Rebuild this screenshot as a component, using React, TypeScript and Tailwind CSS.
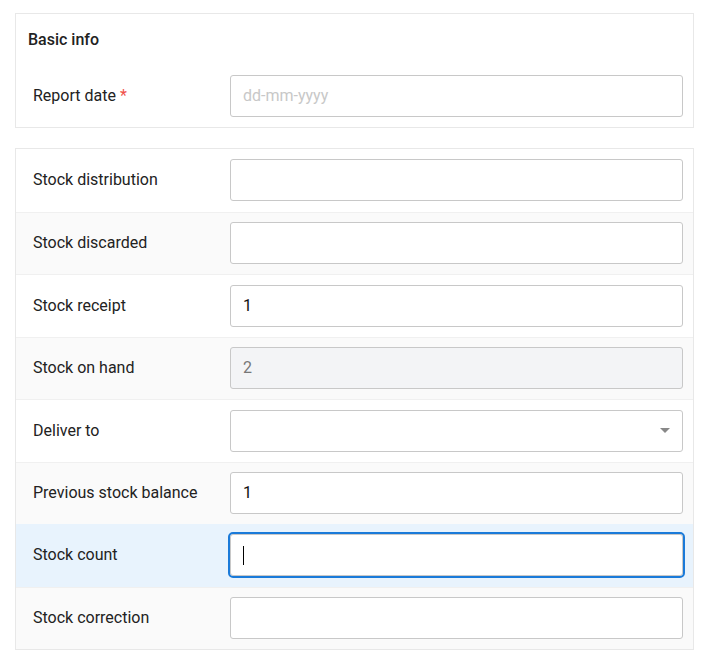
import { ReactNode } from "react";

type Row = {
    label: string;
    value?: string;
    kind?: "text" | "disabled" | "select" | "focused";
};

const rows: Row[] = [
    { label: "Stock distribution" },
    { label: "Stock discarded" },
    { label: "Stock receipt", value: "1" },
    { label: "Stock on hand", value: "2", kind: "disabled" },
    { label: "Deliver to", kind: "select" },
    { label: "Previous stock balance", value: "1" },
    { label: "Stock count", kind: "focused" },
    { label: "Stock correction" },
];

function Field({ row }: { row: Row }) {
    if (row.kind === "disabled") {
        return (
            <div className="flex h-[42px] items-center rounded-[3px] border border-[#c8c8c8] bg-[#f3f4f6] px-3 text-[16px] text-[#777]">
                {row.value}
            </div>
        );
    }
    if (row.kind === "select") {
        return (
            <div className="flex h-[42px] items-center justify-end rounded-[3px] border border-[#c8c8c8] bg-white pr-[12px]">
                <span className="h-0 w-0 border-x-[5px] border-t-[5px] border-x-transparent border-t-[#888]" />
            </div>
        );
    }
    if (row.kind === "focused") {
        return (
            <div className="flex h-[42px] items-center rounded-[3px] border border-[#c8c8c8] bg-white px-3 outline-2 outline-offset-0 outline-[#1a7ad9]">
                <span className="h-[19px] w-px bg-black" />
            </div>
        );
    }
    return (
        <div className="flex h-[42px] items-center rounded-[3px] border border-[#c8c8c8] bg-white px-3 text-[16px] text-[#111]">
            {row.value}
        </div>
    );
}

function FormRow({ label, children, className }: { label: ReactNode; children: ReactNode; className: string }) {
    return (
        <div className={`grid h-[62.5px] grid-cols-[197px_1fr] items-center pl-[17px] pr-[10px] ${className}`}>
            <div className="text-[16px] text-[#222]">{label}</div>
            {children}
        </div>
    );
}

export default function App() {
    return (
        <main
            className="min-h-screen bg-white px-[15px] pt-[13px]"
            style={{ fontFamily: "Roboto, 'Liberation Sans', sans-serif" }}
        >
            <section className="w-[679px] border border-[#e8e8e8] bg-white pb-[10px]">
                <h2 className="pl-[12px] pt-[14px] text-[16px] leading-6 font-medium text-[#222]">Basic info</h2>
                <div className="mt-[23px] grid grid-cols-[197px_1fr] items-center pl-[17px] pr-[10px]">
                    <div className="text-[16px] text-[#222]">
                        Report date <span className="text-[#f0504a]">*</span>
                    </div>
                    <div className="flex h-[42px] items-center rounded-[3px] border border-[#c8c8c8] bg-white px-3 text-[16px] text-[#c8c8c8]">
                        dd-mm-yyyy
                    </div>
                </div>
            </section>

            <section className="mt-[20px] w-[679px] border border-[#e8e8e8] bg-white">
                {rows.map((row, i) => (
                    <FormRow
                        key={row.label}
                        label={row.label}
                        className={
                            row.kind === "focused"
                                ? "bg-[#e8f3fd]"
                                : i % 2 === 1
                                  ? "border-t border-[#f0f0f0] bg-[#fafafa]"
                                  : "border-t border-[#f0f0f0] bg-white first:border-t-0"
                        }
                    >
                        <Field row={row} />
                    </FormRow>
                ))}
            </section>
        </main>
    );
}
